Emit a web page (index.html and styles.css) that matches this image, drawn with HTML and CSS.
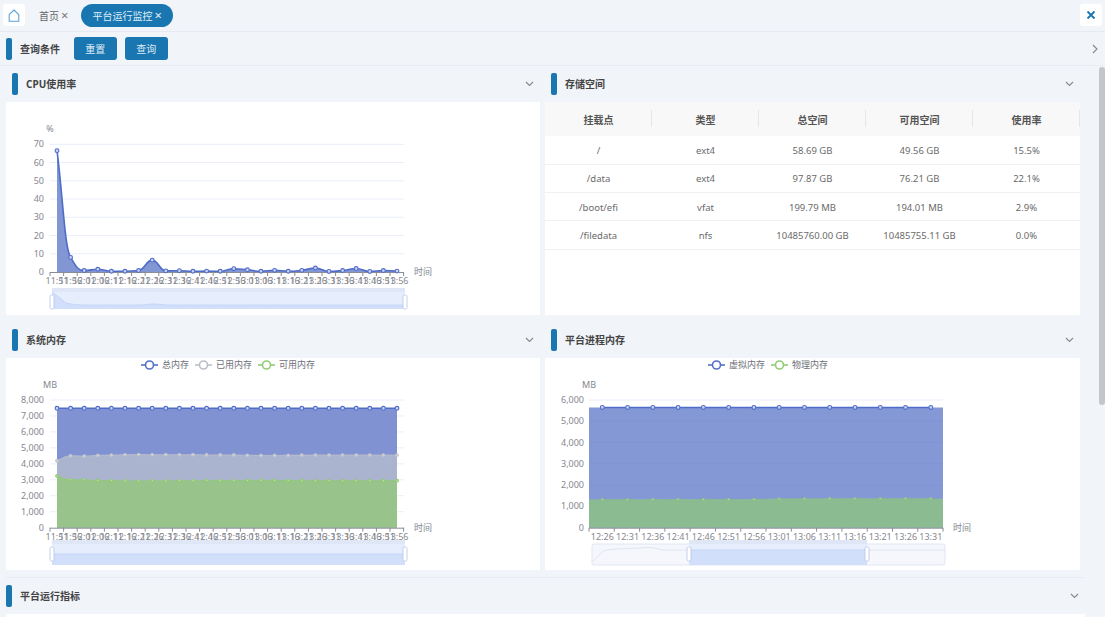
FILE: index.html
```html
<!DOCTYPE html>
<html lang="zh-CN">
<head>
<meta charset="UTF-8" />
<title>平台运行监控</title>
<link rel="stylesheet" href="styles.css">
</head>
<body>

<div class="tabs">
  <div class="icon-box">
    <svg width="12" height="13" viewBox="0 0 12 13" fill="none" stroke="#5aa4d6" stroke-width="1.1"><path d="M1.2 5.6 6 1l4.8 4.6v6.6H1.2z" stroke-linejoin="round"/></svg>
  </div>
  <div class="tab">首页<span class="tab-x">×</span></div>
  <div class="tab tab-active">平台运行监控<span class="tab-x">×</span></div>
  <div class="icon-box icon-close">
    <svg width="10" height="10" viewBox="0 0 10 10" fill="none" stroke="#1a76b0" stroke-width="1.8"><path d="M1.5 1.5l7 7M8.5 1.5l-7 7"/></svg>
  </div>
</div>

<div class="query">
  <span class="accent"></span>
  <span class="title query-title">查询条件</span>
  <button class="btn">重置</button>
  <button class="btn">查询</button>
  <svg class="chev-right" width="6" height="10" viewBox="0 0 6 10" fill="none" stroke="#888" stroke-width="1.1"><path d="M1 1l4 4-4 4"/></svg>
</div>

<div class="main">
  <div class="content">
    <div class="grid">
      <section class="panel">
        <div class="panel-head"><span class="accent"></span><span class="title">CPU使用率</span><svg class="chev" width="9" height="6" viewBox="0 0 9 6"><path d="M1 1l3.5 3.5L8 1"/></svg></div>
        <div class="panel-body tall"><svg id="chart-cpu" class="chart" width="534" height="213" viewBox="6 102 534 213"></svg></div>
      </section>
      <section class="panel">
        <div class="panel-head"><span class="accent"></span><span class="title">存储空间</span><svg class="chev" width="9" height="6" viewBox="0 0 9 6"><path d="M1 1l3.5 3.5L8 1"/></svg></div>
        <div class="panel-body tall">
          <table class="disk">
            <thead>
              <tr><th>挂载点</th><th>类型</th><th>总空间</th><th>可用空间</th><th>使用率</th></tr>
            </thead>
            <tbody>
              <tr><td>/</td><td>ext4</td><td>58.69 GB</td><td>49.56 GB</td><td>15.5%</td></tr>
              <tr><td>/data</td><td>ext4</td><td>97.87 GB</td><td>76.21 GB</td><td>22.1%</td></tr>
              <tr><td>/boot/efi</td><td>vfat</td><td>199.79 MB</td><td>194.01 MB</td><td>2.9%</td></tr>
              <tr><td>/filedata</td><td>nfs</td><td>10485760.00 GB</td><td>10485755.11 GB</td><td>0.0%</td></tr>
            </tbody>
          </table>
        </div>
      </section>
      <section class="panel">
        <div class="panel-head"><span class="accent"></span><span class="title">系统内存</span><svg class="chev" width="9" height="6" viewBox="0 0 9 6"><path d="M1 1l3.5 3.5L8 1"/></svg></div>
        <div class="panel-body"><svg id="chart-mem" class="chart" width="534" height="212" viewBox="6 358 534 212"></svg></div>
      </section>
      <section class="panel">
        <div class="panel-head"><span class="accent"></span><span class="title">平台进程内存</span><svg class="chev" width="9" height="6" viewBox="0 0 9 6"><path d="M1 1l3.5 3.5L8 1"/></svg></div>
        <div class="panel-body"><svg id="chart-proc" class="chart" width="535" height="212" viewBox="545 358 535 212"></svg></div>
      </section>
    </div>
    <section class="wide-head">
      <span class="accent"></span><span class="title">平台运行指标</span>
      <svg class="chev" width="9" height="6" viewBox="0 0 9 6"><path d="M1 1l3.5 3.5L8 1"/></svg>
    </section>
    <div class="wide-body"></div>
  </div>
  <div class="scrollbar"><div class="scroll-thumb"></div></div>
</div>

<script src="charts.js"></script>
</body>
</html>
```

FILE: styles.css
```css
* {
  box-sizing: border-box;
}
body {
  margin: 0;
  width: 1105px;
  height: 617px;
  overflow: hidden;
  background: #f1f4f9;
  font-family: "Noto Sans", "Noto Sans CJK SC", sans-serif;
  font-size: 10px;
  color: #555;
}
.tabs {
  display: flex;
  align-items: center;
  height: 32px;
  padding: 0 3px 1px;
  border-bottom: 1px solid #e6eaf0;
}
.icon-box {
  display: flex;
  align-items: center;
  justify-content: center;
  width: 22px;
  height: 22px;
  background: #fff;
  border-radius: 3px;
}
.icon-close {
  margin-left: auto;
}
.tab {
  display: flex;
  align-items: center;
  height: 23px;
  margin-left: 14px;
  color: #666;
}
.tab-x {
  margin-left: 2px;
  font-size: 13px;
  line-height: 1;
  color: #777;
}
.tab-active {
  margin-left: 13px;
  padding: 0 11px 0 11px;
  background: #1a76b0;
  border-radius: 12px;
  color: #dfeef8;
}
.tab-active .tab-x {
  color: #dfeef8;
}
.query {
  display: flex;
  align-items: center;
  height: 34px;
  padding: 0 7px 0 6px;
  border-bottom: 1px solid #e9edf3;
}
.accent {
  flex: none;
  width: 6px;
  height: 22px;
  background: #1a76b0;
  border-radius: 2px;
}
.title {
  margin-left: 8px;
  font-weight: 700;
  color: #444;
}
.query-title {
  margin-right: 14px;
}
.btn {
  width: 42.5px;
  height: 23px;
  margin-right: 8.5px;
  padding: 0;
  background: #1a76b0;
  border: none;
  border-radius: 3px;
  color: #dcecf7;
  font-family: inherit;
  font-size: 10px;
}
.chev-right {
  margin-left: auto;
}
.main {
  display: flex;
  height: 551px;
}
.content {
  width: 1085px;
  padding-left: 6px;
}
.grid {
  display: grid;
  grid-template-columns: 534px 535px;
  column-gap: 5px;
  row-gap: 7px;
}
.panel-head {
  display: flex;
  align-items: center;
  height: 36px;
  padding: 0 6px;
}
.panel-head .title {
  margin-bottom: 2px;
}
.chev {
  margin-left: auto;
  fill: none;
  stroke: #888;
  stroke-width: 1.1;
}
.panel-body {
  height: 212px;
  background: #fff;
}
.tall {
  height: 213px;
}
.chart {
  display: block;
  font-family: "Noto Sans", "Noto Sans CJK SC", sans-serif;
  font-size: 9px;
}
.disk {
  width: 100%;
  border-collapse: collapse;
  table-layout: fixed;
}
.disk th {
  position: relative;
  height: 34px;
  background: #f8f8f8;
  font-size: 10px;
  font-weight: 700;
  color: #555;
}
.disk th::after {
  content: "";
  position: absolute;
  right: 0;
  top: 8px;
  height: 17px;
  border-right: 1px solid #e6e6e6;
}
.disk td {
  height: 28.3px;
  padding: 1px 0 0;
  border-bottom: 1px solid #eff1f5;
  text-align: center;
  font-size: 9.5px;
  color: #6a6a6a;
}
.wide-head {
  display: flex;
  align-items: center;
  height: 36px;
  margin-top: 7px;
  padding-right: 6px;
  border-top: 1px solid #e9edf3;
}
.wide-body {
  height: 5px;
  margin-top: 1px;
  background: #fff;
}
.scrollbar {
  width: 6px;
  margin-left: 14px;
}
.scroll-thumb {
  height: 338px;
  margin-top: 1px;
  background: #c4c6ca;
  border-radius: 3px;
}
```

FILE: charts.js
```js
const NS = 'http://www.w3.org/2000/svg';
const BLUE = '#5470c6';
const GREEN = '#91cc75';
const GREY = '#b9bec9';
const LABEL = '#85878f';

function add(svg, tag, attrs, text) {
  const el = document.createElementNS(NS, tag);
  for (const k in attrs) el.setAttribute(k, attrs[k]);
  if (text !== undefined) el.textContent = text;
  svg.appendChild(el);
  return el;
}

// monotone cubic through the points, so peaks stay on the data
function curve(pts) {
  const slopes = [];
  for (let i = 1; i < pts.length; i++) {
    slopes.push((pts[i][1] - pts[i - 1][1]) / (pts[i][0] - pts[i - 1][0]));
  }
  const tan = pts.map((p, i) => {
    if (i === 0) return slopes[0];
    if (i === pts.length - 1) return slopes[i - 1];
    const a = slopes[i - 1];
    const b = slopes[i];
    return a * b <= 0 ? 0 : 2 * a * b / (a + b);
  });
  let d = `M${pts[0][0]} ${pts[0][1]}`;
  for (let i = 1; i < pts.length; i++) {
    const [x0, y0] = pts[i - 1];
    const [x1, y1] = pts[i];
    const h = (x1 - x0) * 0.45;
    d += `C${x0 + h} ${y0 + tan[i - 1] * h} ${x1 - h} ${y1 - tan[i] * h} ${x1} ${y1}`;
  }
  return d;
}

function timeLabels(startH, startM, count) {
  const out = [];
  for (let i = 0; i < count; i++) {
    const m = startH * 60 + startM + i * 5;
    out.push(`${Math.floor(m / 60)}:${String(m % 60).padStart(2, '0')}`);
  }
  return out;
}

// grid lines and the text of the y axis
function axes(svg, o) {
  const step = (o.y0 - o.yTop) / o.ticks.length;
  const gap = o.gap || 6;
  add(svg, 'text', { x: o.left - gap, y: o.y0 + 3, 'text-anchor': 'end', fill: LABEL }, '0');
  o.ticks.forEach((t, i) => {
    const y = o.y0 - step * (i + 1);
    add(svg, 'line', { x1: o.left, x2: o.right, y1: y, y2: y, stroke: '#e9eefa' });
    add(svg, 'text', { x: o.left - gap, y: y + 3, 'text-anchor': 'end', fill: LABEL }, t);
  });
  add(svg, 'text', { x: o.left, y: o.yTop - 12, 'text-anchor': 'middle', fill: LABEL }, o.unit);
  add(svg, 'text', { x: o.right + 10, y: o.y0 + 3, fill: LABEL }, '时间');
}

function xAxis(svg, o) {
  add(svg, 'line', { x1: o.left, x2: o.right, y1: o.y0 + 0.5, y2: o.y0 + 0.5, stroke: '#8a8d96' });
  for (let i = 0; i <= o.labels.length; i++) {
    const x = o.left + o.tick * i;
    add(svg, 'line', { x1: x, x2: x, y1: o.y0, y2: o.y0 + 4, stroke: '#8a8d96' });
  }
  o.labels.forEach((t, i) => {
    add(svg, 'text', { x: o.first + o.step * i, y: o.y0 + 12, 'text-anchor': 'middle', fill: LABEL }, t);
  });
}

function series(svg, xs, vals, toY, s) {
  const pts = vals.map((v, i) => [xs[i], toY(v)]);
  const line = curve(pts);
  const x0 = s.fromX !== undefined ? s.fromX : xs[0];
  const x1 = s.toX !== undefined ? s.toX : xs[xs.length - 1];
  let d = `M${x0} ${toY(0)}L${x0} ${pts[0][1]}L` + line.slice(1);
  d += `L${x1} ${pts[pts.length - 1][1]}L${x1} ${toY(0)}Z`;
  add(svg, 'path', { d: d, fill: s.fill, 'fill-opacity': s.opacity || 1 });
  return { pts, line, color: s.color, dot: s.dot, width: s.width, r: s.r };
}

function drawSeries(svg, r) {
  add(svg, 'path', { d: r.line, fill: 'none', stroke: r.color, 'stroke-width': r.width });
  r.pts.forEach(p => {
    add(svg, 'circle', { cx: p[0], cy: p[1], r: r.r || 1.9, fill: r.dot || '#c9d3f0', stroke: r.color, 'stroke-width': 1.1 });
  });
}

function legend(svg, items, y) {
  items.forEach(it => {
    add(svg, 'line', { x1: it.x, x2: it.x + 17, y1: y, y2: y, stroke: it.color, 'stroke-width': 1.6 });
    add(svg, 'circle', { cx: it.x + 8.5, cy: y, r: 4, fill: '#fff', stroke: it.color, 'stroke-width': 1.6 });
    add(svg, 'text', { x: it.x + 21, y: y + 3, fill: '#6e7079' }, it.text);
  });
}

function handle(svg, x, y, h) {
  add(svg, 'rect', { x: x - 2, y: y, width: 4, height: h, rx: 1.5, fill: '#fff', stroke: '#b4c4e6', 'stroke-width': 0.8 });
}

// slider under a chart; spark is a list of [x, y] for the shaded shape
function slider(svg, o) {
  const top = o.y + 4;
  const h = o.bottom - top;
  if (o.outer) {
    add(svg, 'rect', { x: o.x0, y: top, width: o.x1 - o.x0, height: h, rx: 2, fill: '#f5f7fc', stroke: '#dfe6f5' });
    add(svg, 'path', { d: curve(o.outer), fill: 'none', stroke: '#dfe4ee' });
  }
  add(svg, 'rect', { x: o.s0, y: o.y, width: o.s1 - o.s0, height: 4, fill: '#dfe6f5' });
  add(svg, 'rect', { x: o.s0, y: top, width: o.s1 - o.s0, height: h, fill: '#e6eefe' });
  const line = curve(o.spark);
  add(svg, 'path', { d: `M${o.s0} ${o.bottom}L` + line.slice(1) + `L${o.s1} ${o.bottom}Z`, fill: '#d2dffa' });
  add(svg, 'path', { d: line, fill: 'none', stroke: '#bfd1f6', 'stroke-width': 0.8 });
  handle(svg, o.s0, top + 3, 14);
  handle(svg, o.s1, top + 3, 14);
}

const xs26 = Array.from({ length: 26 }, (_, i) => 57 + 13.6 * i);
const labels26 = timeLabels(11, 51, 26);

function drawCpu() {
  const svg = document.getElementById('chart-cpu');
  const y0 = 272;
  const toY = v => y0 - v * 1.825;
  axes(svg, { left: 50, right: 404, y0: y0, yTop: 144.3, unit: '%', ticks: ['10', '20', '30', '40', '50', '60', '70'] });
  const vals = [66.5, 8, 0.8, 1.5, 0.4, 0.4, 0.8, 6.5, 0.6, 0.7, 0.4, 0.5, 0.4, 1.8, 1.2, 0.4, 0.9, 0.4, 0.9, 2.2, 0.3, 0.8, 1.9, 0.3, 0.8, 0.5];
  const r = series(svg, xs26, vals, toY, { fill: '#8296d4', color: '#4f6cc8', width: 1.6 });
  xAxis(svg, { left: 50, right: 404, y0: y0, tick: 13.6, first: 57, step: 13.6, labels: labels26 });
  drawSeries(svg, r);
  const spark = [[52, 292], [60, 298], [68, 303.5], [85, 305], [140, 305], [152, 304], [170, 305], [405, 305]];
  slider(svg, { x0: 52, x1: 405, s0: 52, s1: 405, y: 288, bottom: 309, spark: spark });
}

function drawMem() {
  const svg = document.getElementById('chart-mem');
  const y0 = 527.7;
  const toY = v => y0 - v * 127.7 / 8000;
  legend(svg, [
    { x: 141, color: BLUE, text: '总内存' },
    { x: 195, color: GREY, text: '已用内存' },
    { x: 258, color: GREEN, text: '可用内存' }
  ], 365);
  axes(svg, { left: 50, right: 404, y0: y0, yTop: 400, unit: 'MB', ticks: ['1,000', '2,000', '3,000', '4,000', '5,000', '6,000', '7,000', '8,000'] });
  const total = xs26.map(() => 7480);
  const used = [4200, 4500, 4490, 4530, 4550, 4570, 4580, 4570, 4575, 4570, 4575, 4560, 4560, 4560, 4540, 4530, 4530, 4540, 4550, 4555, 4555, 4555, 4555, 4555, 4555, 4555];
  const free = [3250, 3000, 3000, 2960, 2950, 2930, 2920, 2935, 2930, 2940, 2935, 2950, 2950, 2950, 2960, 2970, 2960, 2950, 2945, 2945, 2945, 2945, 2945, 2945, 2945, 2945];
  const a = series(svg, xs26, total, toY, { fill: '#8092d1', color: '#4f6cc8', width: 1.6 });
  const b = series(svg, xs26, used, toY, { fill: '#abb4cf', color: '#bfc3cc', width: 0.8, dot: '#d8d9d6', r: 1.3 });
  const c = series(svg, xs26, free, toY, { fill: '#98c48c', color: '#8fca72', width: 0.8, dot: '#c7e0a8', r: 1.3 });
  xAxis(svg, { left: 50, right: 404, y0: y0, tick: 13.6, first: 57, step: 13.6, labels: labels26 });
  drawSeries(svg, a);
  drawSeries(svg, b);
  drawSeries(svg, c);
  slider(svg, { x0: 52, x1: 405, s0: 52, s1: 405, y: 540, bottom: 565, spark: [[52, 554], [405, 554]] });
}

function drawProc() {
  const svg = document.getElementById('chart-proc');
  const y0 = 527.7;
  const toY = v => y0 - v * 127.7 / 6000;
  const xs = Array.from({ length: 14 }, (_, i) => 602.3 + 25.27 * i);
  legend(svg, [
    { x: 708, color: BLUE, text: '虚拟内存' },
    { x: 771, color: GREEN, text: '物理内存' }
  ], 365);
  axes(svg, { left: 589, right: 943, y0: y0, yTop: 400, gap: 5, unit: 'MB', ticks: ['1,000', '2,000', '3,000', '4,000', '5,000', '6,000'] });
  const virt = xs.map(() => 5650);
  const phys = [1320, 1320, 1320, 1320, 1330, 1330, 1330, 1350, 1355, 1360, 1365, 1365, 1365, 1365];
  const a = series(svg, xs, virt, toY, { fill: '#5470c6', opacity: 0.72, color: '#4f6cc8', width: 1.6, fromX: 589, toX: 943 });
  const b = series(svg, xs, phys, toY, { fill: '#8bbb90', color: '#8bbb90', width: 0.8, dot: '#c7e27e', r: 1.2, fromX: 589, toX: 943 });
  xAxis(svg, { left: 589, right: 943, y0: y0, tick: 25.29, first: 602.3, step: 25.27, labels: timeLabels(12, 26, 14) });
  drawSeries(svg, a);
  drawSeries(svg, b);
  slider(svg, {
    x0: 592, x1: 945, s0: 689, s1: 867, y: 540, bottom: 565,
    outer: [[593, 561], [607, 550], [640, 548], [650, 547.5], [665, 550], [689, 550], [945, 550]],
    spark: [[689, 550], [867, 550]]
  });
}

drawCpu();
drawMem();
drawProc();
```
